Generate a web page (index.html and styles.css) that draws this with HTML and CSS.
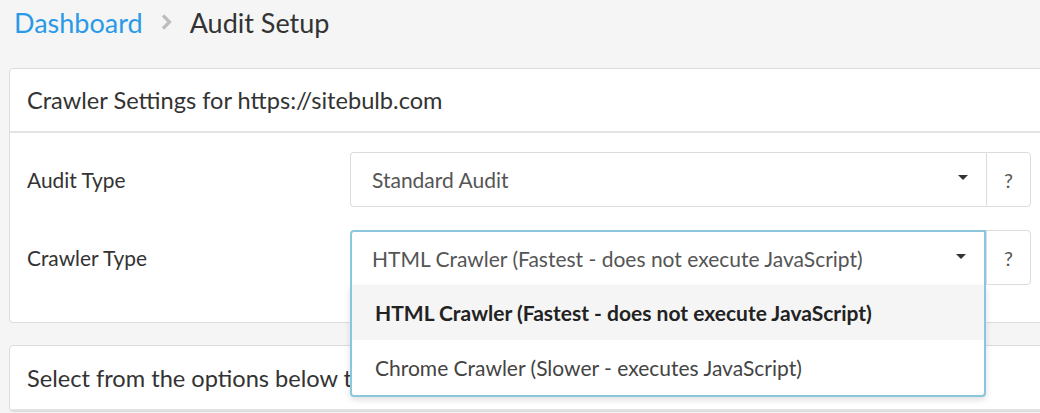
FILE: index.html
```html
<!DOCTYPE html>
<html>
<head>
<meta charset="utf-8">
<link rel="stylesheet" href="styles.css">
</head>
<body>
<div class="page">
  <nav class="breadcrumb">
    <a class="crumb-link" href="#">Dashboard</a>
    <svg class="crumb-sep" width="13" height="18" viewBox="0 0 13 18"><path d="M3 2.5 L9.5 9 L3 15.5" fill="none" stroke="#bdbdbd" stroke-width="3.2"/></svg>
    <span class="crumb-current">Audit Setup</span>
  </nav>

  <section class="panel">
    <header class="panel-head">Crawler Settings for https://sitebulb.com</header>
    <div class="panel-body">
      <div class="form-row">
        <label class="form-label">Audit Type</label>
        <div class="input-group">
          <div class="select">
            <span class="select-text">Standard Audit</span>
            <span class="caret"></span>
          </div>
          <span class="addon">?</span>
        </div>
      </div>
      <div class="form-row">
        <label class="form-label">Crawler Type</label>
        <div class="input-group">
          <div class="select select-open">
            <span class="select-text">HTML Crawler (Fastest - does not execute JavaScript)</span>
            <span class="caret"></span>
            <ul class="dropdown">
              <li class="option option-selected">HTML Crawler (Fastest - does not execute JavaScript)</li>
              <li class="option">Chrome Crawler (Slower - executes JavaScript)</li>
            </ul>
          </div>
          <span class="addon">?</span>
        </div>
      </div>
    </div>
  </section>

  <section class="panel panel-second">
    <header class="panel-head">Select from the options below to configure the audit</header>
  </section>
</div>
</body>
</html>
```
FILE: styles.css
```css
html, body {
  margin: 0;
  padding: 0;
  background: #f5f5f5;
  overflow: hidden;
}
body {
  font-family: Lato, "Open Sans", sans-serif;
  color: #333;
  width: 1040px;
  height: 413px;
}
.page {
  padding-left: 9px;
}
.breadcrumb {
  display: flex;
  align-items: center;
  height: 44px;
  padding-left: 5px;
  font-size: 27px;
}
.crumb-link {
  color: #2a9ae8;
  text-decoration: none;
}
.crumb-sep {
  margin: 0 17px 0 17px;
}
.crumb-current {
  color: #333;
}
.panel {
  margin-top: 24px;
  margin-right: -30px;
  background: #fff;
  border: 1px solid #dcdcdc;
  border-radius: 4px;
}
.panel-head {
  height: 62px;
  display: flex;
  align-items: center;
  padding-left: 17px;
  font-size: 23.6px;
  color: #333;
  border-bottom: 2px solid #e3e3e3;
}
.panel-body {
  padding: 19px 0 37px 17px;
  display: flex;
  flex-direction: column;
  gap: 23px;
}
.form-row {
  display: flex;
  align-items: center;
}
.form-label {
  width: 323px;
  font-size: 20.9px;
  color: #333;
}
.input-group {
  display: flex;
  height: 55px;
}
.select {
  position: relative;
  box-sizing: border-box;
  width: 636px;
  height: 55px;
  border: 1px solid #dcdcdc;
  border-right: none;
  border-radius: 4px 0 0 4px;
  display: flex;
  align-items: center;
  padding-left: 21px;
  font-size: 21px;
  color: #555;
}
.select-text {
  flex: 1;
}
.caret {
  width: 0;
  height: 0;
  border-left: 5px solid transparent;
  border-right: 5px solid transparent;
  border-top: 5px solid #333;
  margin-right: 18px;
  margin-top: -4px;
}
.select-open {
  border: 2px solid #8ac6dc;
  border-bottom: none;
  border-radius: 4px 0 0 0;
  padding-left: 20px;
}
.addon {
  box-sizing: border-box;
  width: 45px;
  height: 55px;
  border: 1px solid #dcdcdc;
  border-radius: 0 4px 4px 0;
  display: flex;
  align-items: center;
  justify-content: center;
  font-size: 20px;
  color: #555;
}
.dropdown {
  position: absolute;
  left: -2px;
  right: -2px;
  top: 53px;
  margin: 0;
  padding: 0;
  list-style: none;
  background: #fff;
  border: 2px solid #8ac6dc;
  border-top: none;
  border-radius: 0 0 4px 4px;
  box-shadow: 0 3px 6px rgba(0,0,0,0.12);
  z-index: 2;
}
.option {
  height: 55px;
  display: flex;
  align-items: center;
  padding-left: 23px;
  font-size: 21px;
  color: #444;
}
.option-selected {
  background: #f5f5f5;
  font-weight: bold;
  color: #222;
}
.panel-second {
  margin-top: 22px;
}
.panel-second .panel-head {
  height: 63px;
}
```
